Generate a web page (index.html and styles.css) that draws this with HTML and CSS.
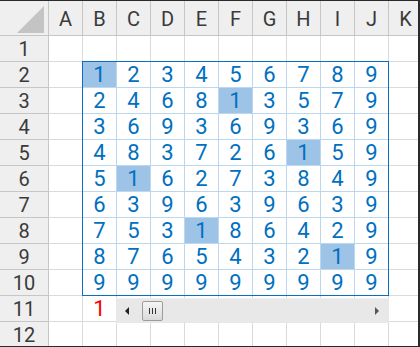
FILE: index.html
```html
<!DOCTYPE html>
<html lang="en">
<head>
    <meta charset="UTF-8">
    <meta name="viewport" content="width=device-width, initial-scale=1.0">
    <title>Multiplication digits</title>
    <link rel="stylesheet" href="styles.css">
</head>
<body>
    <div class="frame">
        <div class="sheet" id="sheet"></div>
    </div>
    <script>
        // digit sums of i*j for rows 2..10, columns B..J
        const data = [
            [1, 2, 3, 4, 5, 6, 7, 8, 9],
            [2, 4, 6, 8, 1, 3, 5, 7, 9],
            [3, 6, 9, 3, 6, 9, 3, 6, 9],
            [4, 8, 3, 7, 2, 6, 1, 5, 9],
            [5, 1, 6, 2, 7, 3, 8, 4, 9],
            [6, 3, 9, 6, 3, 9, 6, 3, 9],
            [7, 5, 3, 1, 8, 6, 4, 2, 9],
            [8, 7, 6, 5, 4, 3, 2, 1, 9],
            [9, 9, 9, 9, 9, 9, 9, 9, 9]
        ];
        const letters = 'ABCDEFGHIJK';
        const sheet = document.getElementById('sheet');

        function add(cls, text, row, col) {
            const d = document.createElement('div');
            d.className = cls;
            if (text !== undefined && text !== null) d.textContent = text;
            if (row) {
                d.style.gridRow = row;
                d.style.gridColumn = col;
            }
            sheet.appendChild(d);
            return d;
        }

        const corner = add('corner', null, 1, 1);
        corner.innerHTML = '<svg width="48" height="34" viewBox="0 0 48 34"><polygon points="17,32 44,32 44,5" fill="#c4c4c4"/></svg>';

        for (let c = 0; c < letters.length; c++) {
            add('col-head', letters[c], 1, c + 2);
        }

        for (let r = 1; r <= 12; r++) {
            add('row-head', r, r + 1, 1);
            for (let c = 0; c < letters.length; c++) {
                let cls = 'cell';
                let text = null;
                if (r >= 2 && r <= 10 && c >= 1 && c <= 9) {
                    text = data[r - 2][c - 1];
                    cls += ' in-range';
                    if (text === 1) cls += ' hit';
                }
                if (r === 11 && c === 1) {
                    text = 1;
                    cls += ' note';
                }
                add(cls, text, r + 1, c + 2);
            }
        }

        // selection outline over B2:J10
        add('range', null, '3 / 12', '3 / 12');

        // horizontal scroll bar sitting in row 11
        const bar = add('hscroll', null, 12, '4 / 12');
        bar.innerHTML =
            '<div class="arrow-btn"><span class="arrow-left"></span></div>' +
            '<div class="thumb"><i></i><i></i><i></i></div>' +
            '<div class="track"></div>' +
            '<div class="arrow-btn"><span class="arrow-right"></span></div>';
    </script>
</body>
</html>
```

FILE: styles.css
```css
body {
    margin: 0;
    padding: 0;
    background-color: #ffffff;
    font-family: Roboto, "Liberation Sans", sans-serif;
}

.frame {
    width: 420px;
    height: 347px;
    box-sizing: border-box;
    border-top: 1px solid #2a2a2a;
    border-right: 2px solid #2a2a2a;
    border-bottom: 1px solid #2a2a2a;
    overflow: hidden;
}

.sheet {
    display: grid;
    grid-template-columns: 49px repeat(11, 34px);
    grid-template-rows: 35px repeat(12, 26px);
}

.sheet > div {
    box-sizing: border-box;
}

.corner,
.col-head,
.row-head {
    background-color: #efefef;
    border-right: 1px solid #c6c6c6;
    border-bottom: 1px solid #c6c6c6;
    color: #3a3a3a;
    font-size: 20px;
    line-height: 1;
    display: flex;
    align-items: center;
    justify-content: center;
}

.corner svg {
    display: block;
}

.col-head {
    padding-top: 2px;
}

.cell {
    border-right: 1px solid #dadada;
    border-bottom: 1px solid #dadada;
    display: flex;
    align-items: center;
    justify-content: center;
    font-size: 22px;
    line-height: 1;
    color: #0070c0;
}

.cell.in-range {
    border-right-color: #bdd7ee;
    border-bottom-color: #bdd7ee;
}

.cell.hit {
    background-color: #9dc3e6;
}

.cell.note {
    color: #ff0000;
}

.range {
    margin: -1px 0 0 -1px;
    border: 1px solid #0a6fc2;
    pointer-events: none;
}

.hscroll {
    margin: 2px 0 -1px -1px;
    background-color: #e8e8e8;
    border-top: 1px solid #f0f0f0;
    display: flex;
    align-items: center;
}

.arrow-btn {
    width: 24px;
    height: 100%;
    display: flex;
    align-items: center;
    justify-content: center;
}

.arrow-left {
    width: 0;
    height: 0;
    border-top: 4px solid transparent;
    border-bottom: 4px solid transparent;
    border-right: 4px solid #222;
    margin-left: -2px;
}

.arrow-right {
    width: 0;
    height: 0;
    border-top: 4px solid transparent;
    border-bottom: 4px solid transparent;
    border-left: 4px solid #555;
}

.thumb {
    margin-left: 2px;
    width: 21px;
    height: 20px;
    box-sizing: border-box;
    border: 1px solid #9c9c9c;
    border-radius: 2px;
    background: linear-gradient(#f5f5f5, #dadada);
    display: flex;
    align-items: center;
    justify-content: center;
    gap: 2px;
}

.thumb i {
    width: 1px;
    height: 6px;
    background-color: #333;
}

.track {
    flex: 1;
}
```
